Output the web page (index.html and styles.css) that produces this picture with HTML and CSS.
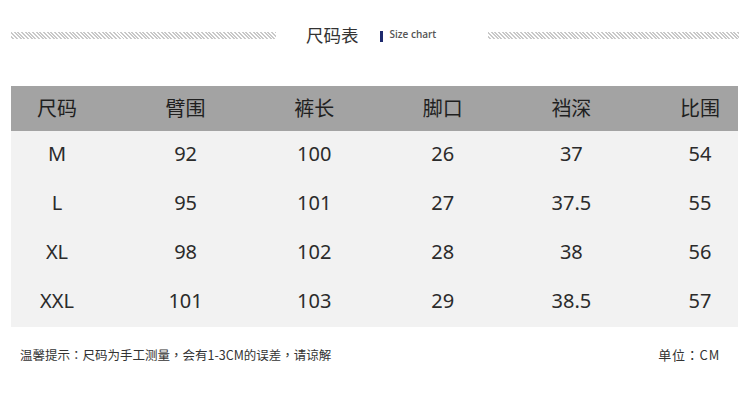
FILE: index.html
```html
<!DOCTYPE html>
<html lang="zh-CN">
<head>
<meta charset="utf-8">
<link rel="stylesheet" href="styles.css">
</head>
<body>
<div class="page">
  <div class="title-row">
    <div class="hatch hatch-left"></div>
    <div class="title">尺码表</div>
    <div class="sub"><span class="bar"></span><span class="sub-text">Size chart</span></div>
    <div class="hatch hatch-right"></div>
  </div>
  <div class="table">
    <div class="row head">
      <div class="cell">尺码</div><div class="cell">臂围</div><div class="cell">裤长</div><div class="cell">脚口</div><div class="cell">裆深</div><div class="cell">比围</div>
    </div>
    <div class="row">
      <div class="cell">M</div><div class="cell">92</div><div class="cell">100</div><div class="cell">26</div><div class="cell">37</div><div class="cell">54</div>
    </div>
    <div class="row">
      <div class="cell">L</div><div class="cell">95</div><div class="cell">101</div><div class="cell">27</div><div class="cell">37.5</div><div class="cell">55</div>
    </div>
    <div class="row">
      <div class="cell">XL</div><div class="cell">98</div><div class="cell">102</div><div class="cell">28</div><div class="cell">38</div><div class="cell">56</div>
    </div>
    <div class="row">
      <div class="cell">XXL</div><div class="cell">101</div><div class="cell">103</div><div class="cell">29</div><div class="cell">38.5</div><div class="cell">57</div>
    </div>
  </div>
  <div class="foot" lang="zh-TW">
    <span class="note">温馨提示：尺码为手工测量，会有1-3CM的误差，请谅解</span>
    <span class="unit">单位：CM</span>
  </div>
</div>
</body>
</html>
```
FILE: styles.css
```css
html, body {
  margin: 0;
  padding: 0;
  background: #ffffff;
}
.page {
  width: 750px;
  height: 403px;
  font-family: "Noto Sans", "Noto Sans CJK SC", sans-serif;
  color: #333;
}
.title-row {
  display: flex;
  align-items: center;
  height: 20px;
  padding-top: 25px;
}
.hatch {
  height: 7px;
  background: repeating-linear-gradient(45deg, #ffffff 0, #ffffff 1.2px, #c9c9c9 1.2px, #c9c9c9 2.6px);
}
.hatch-left {
  width: 265px;
  margin-left: 11px;
}
.title {
  margin-left: 30px;
  font-family: "Noto Sans CJK SC", sans-serif;
  font-size: 17.5px;
  color: #333;
  line-height: 20px;
}
.sub {
  display: flex;
  align-items: center;
  margin-left: 21px;
}
.bar {
  width: 3px;
  height: 11px;
  background: #1e2a6e;
  margin-top: 3px;
}
.sub-text {
  margin-left: 7px;
  font-family: "Open Sans", sans-serif;
  font-weight: 600;
  font-size: 10px;
  color: #555;
  margin-top: -2px;
}
.hatch-right {
  width: 251px;
  margin-left: auto;
  margin-right: 11px;
}
.table {
  margin: 41px 12px 0 11px;
  background: #f2f2f2;
}
.row {
  display: flex;
  justify-content: space-between;
  align-items: center;
  height: 49px;
  padding: 0 8px 0 16px;
  font-size: 20px;
  color: #2b2b2b;
  box-sizing: border-box;
  padding-bottom: 3px;
}
.row.head {
  height: 45px;
  background: #a3a3a3;
  color: #1f1f1f;
  font-family: "Noto Sans CJK SC", sans-serif;
  padding-bottom: 2px;
}
.cell {
  width: 60px;
  text-align: center;
  line-height: 24px;
}
.foot {
  display: flex;
  justify-content: space-between;
  align-items: center;
  padding: 18px 31px 0 20px;
  font-family: "Noto Sans CJK TC", sans-serif;
  font-size: 12.5px;
  color: #333;
}
.unit {
  font-size: 13px;
  letter-spacing: 0.8px;
  margin-right: -1px;
}
```
